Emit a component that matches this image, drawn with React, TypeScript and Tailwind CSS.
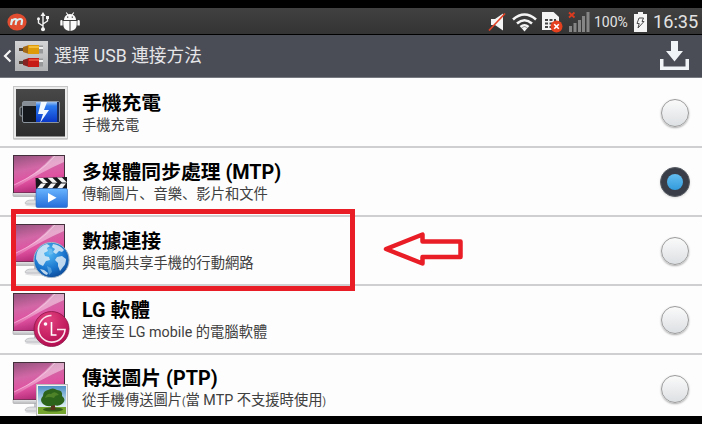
import { useState } from "react";
import type { ReactNode } from "react";

function Monitor({ id, children }: { id: string; children?: ReactNode }) {
  return (
    <svg width="60" height="60" viewBox="0 0 60 60">
      <defs>
        <linearGradient id={`${id}-screen`} x1="0.2" y1="0" x2="0.5" y2="1">
          <stop offset="0" stopColor="#9c5683" />
          <stop offset="0.35" stopColor="#d267a6" />
          <stop offset="0.65" stopColor="#e052a1" />
          <stop offset="1" stopColor="#ae2672" />
        </linearGradient>
        <linearGradient id={`${id}-glow`} x1="0" y1="1" x2="1" y2="0">
          <stop offset="0" stopColor="#fff" stopOpacity="0.05" />
          <stop offset="0.5" stopColor="#ffe0f2" stopOpacity="0.5" />
          <stop offset="1" stopColor="#fff" stopOpacity="0.45" />
        </linearGradient>
        <linearGradient id={`${id}-chin`} x1="0" y1="0" x2="0" y2="1">
          <stop offset="0" stopColor="#f2f2f2" />
          <stop offset="1" stopColor="#b5b7ba" />
        </linearGradient>
      </defs>
      <ellipse cx="28" cy="54" rx="15" ry="1.8" fill="#e2e2e4" />
      <path d="M22 44h16v7H22z" fill="#c3c6ca" />
      <path d="M13 52q1-3 7-3h21v4H15q-2 0-2-1z" fill="#dcdee0" stroke="#a8aaae" strokeWidth="0.6" />
      <rect x="1" y="41" width="52" height="4.5" rx="1" fill={`url(#${id}-chin)`} stroke="#a6a6aa" strokeWidth="0.6" />
      <rect x="1" y="4" width="52" height="38" fill="#43303c" />
      <rect x="2" y="5" width="50" height="36.5" fill={`url(#${id}-screen)`} />
      <path d="M2 34Q24 24 41 5h11v6Q31 20 2 38z" fill={`url(#${id}-glow)`} />
      <path d="M2 34Q30 21 43 5" fill="none" stroke="#ffd5ec" strokeWidth="0.9" opacity="0.6" />
      {children}
    </svg>
  );
}

function ChargeIcon() {
  return (
    <svg width="60" height="60" viewBox="0 -1 60 60">
      <defs>
        <linearGradient id="tile" x1="0" y1="0" x2="0" y2="1">
          <stop offset="0" stopColor="#484848" />
          <stop offset="1" stopColor="#2c2c2c" />
        </linearGradient>
        <linearGradient id="cell" x1="0" y1="0" x2="0" y2="1">
          <stop offset="0" stopColor="#9fc4f0" />
          <stop offset="0.2" stopColor="#2c7bf0" />
          <stop offset="1" stopColor="#0938c8" />
        </linearGradient>
      </defs>
      <rect x="1" y="4" width="55" height="52.5" rx="1" fill="#a9a9a9" />
      <rect x="1.5" y="3.5" width="54" height="52" fill="#ebebeb" stroke="#c6c6c6" />
      <rect x="4" y="6" width="49" height="47.5" fill="url(#tile)" />
      <rect x="8" y="24" width="4" height="9" rx="1" fill="#20262b" stroke="#b6bcc0" strokeWidth="0.8" />
      <rect x="10.5" y="18.5" width="37" height="21" rx="1.5" fill="#15181d" stroke="#8b939c" />
      <path d="M11 19h13v4H11z" fill="#888e95" />
      <path d="M24 19h21v20H24z" fill="url(#cell)" />
      <path d="M45 19h2v20h-2z" fill="#1a2c57" />
      <path d="m29 19-3 12h5l-3 9 9-13h-5l3-8z" fill="#f2f9ff" />
    </svg>
  );
}

function MediaIcon() {
  return (
    <Monitor id="media">
      <defs>
        <linearGradient id="clip" x1="0" y1="0" x2="0" y2="1">
          <stop offset="0" stopColor="#69b5ff" />
          <stop offset="1" stopColor="#246dda" />
        </linearGradient>
      </defs>
      <path d="m23.5 27 31.5-1v12H24z" fill="#16181b" />
      <path d="m26 27 5 5h5l-5-5zm9.5-.2 5 5h5l-5-5zm9.5-.4 5 5h5l-5-5zM25 37.5l4-5h5l-4 5zm10 0 4-5h5l-4 5zm10 0 4-5h5l-4 5z" fill="#f4f4f4" />
      <rect x="24" y="37.5" width="31.5" height="19" rx="1.5" fill="url(#clip)" stroke="#2c69bd" strokeWidth="0.6" />
      <path d="m36 42 8.5 4.8-8.5 4.7z" fill="#fff" />
    </Monitor>
  );
}

function TetherIcon() {
  return (
    <Monitor id="tether">
      <defs>
        <radialGradient id="globe" cx="0.4" cy="0.3" r="0.75">
          <stop offset="0" stopColor="#56bdf7" />
          <stop offset="0.6" stopColor="#1b77cf" />
          <stop offset="1" stopColor="#0c4795" />
        </radialGradient>
      </defs>
      <circle cx="39.5" cy="40" r="17.6" fill="url(#globe)" stroke="#a5b6c6" strokeWidth="1" />
      <path d="M26 30q4-5 9-6l3 2-3 2 1 3-4 2 1 3 4 1 1 3-4 1-3 5-4-2-3-5q0-5 2-9zM41 24q7 1 11 6l-2 2-3-1-3 3-3-2 2-3-3-2zM45 37l5-1 4 3q0 5-3 8l-3 4-2-5v-3l-3-3zM28 49l4 1 4 3-1 2q-4-1-7-6z" fill="#dcebf6" opacity="0.85" />
      <path d="m36 28 4 1 1 5-4 1zM35 46l4 2 1 4-3 3z" fill="#85c5ed" opacity="0.5" />
    </Monitor>
  );
}

function SoftwareIcon() {
  return (
    <Monitor id="software">
      <defs>
        <radialGradient id="brand" cx="0.4" cy="0.25" r="0.8">
          <stop offset="0" stopColor="#e34381" />
          <stop offset="1" stopColor="#b1094d" />
        </radialGradient>
      </defs>
      <circle cx="39.5" cy="40" r="17.5" fill="url(#brand)" stroke="#8c1747" strokeWidth="0.8" />
      <path d="M39.5 26.5A13.3 13.3 0 1 0 53 40.5h-8" fill="none" stroke="#fbe6ee" strokeWidth="1.6" />
      <path d="M39.5 33v13h5" fill="none" stroke="#fff" strokeWidth="1.6" />
      <circle cx="33.5" cy="35" r="1.8" fill="#fff" />
    </Monitor>
  );
}

function PictureIcon() {
  return (
    <Monitor id="picture">
      <defs>
        <linearGradient id="sky" x1="0" y1="0" x2="0" y2="1">
          <stop offset="0" stopColor="#4e91c7" />
          <stop offset="0.7" stopColor="#d8ecf4" />
        </linearGradient>
      </defs>
      <rect x="24.5" y="26.5" width="31" height="31" fill="#f2f2f2" stroke="#bdbdbd" />
      <path d="M26 28h28v28H26z" fill="url(#sky)" />
      <path d="M26 49h28v7H26z" fill="#75a52e" />
      <ellipse cx="41" cy="51.5" rx="10" ry="2" fill="#365d18" />
      <path d="M39.5 44h3l1 8h-5z" fill="#58351c" />
      <path d="M31 46q-4-4 0-8 0-5 5-6 5-3 9 0 6 0 5 6 5 4 0 8-4 3-8 1-6 3-11-1z" fill="#2c641c" />
      <path d="M33 40q2-5 6-4 4-4 8 1-4 0-5 3-5-2-9 0z" fill="#4f8329" />
    </Monitor>
  );
}

function StatusBar() {
  return (
    <div className="flex h-[27px] items-center justify-between border-b border-black bg-linear-to-b from-[#414141] to-[#343434] pt-px pr-[3px] pl-[7px] text-[#e2e2e2]">
      <div className="flex items-center">
        <svg width="20" height="18" viewBox="0 0 20 18">
          <ellipse cx="10" cy="9" rx="9.6" ry="8.6" fill="#df4c30" />
          <path d="m4 12 1.2-6M4.8 8.5Q6 6 8 6q2 0 1.2 2.3L8.5 12M9.2 8.5Q10.8 6 13 6q2.6 0 2 2.3L14.3 12" fill="none" stroke="#d9eef0" strokeWidth="2.1" />
        </svg>
        <svg className="ml-[9px]" width="14" height="20" viewBox="0 0 14 20" fill="none" stroke="#f5f5f5" strokeWidth="1.4">
          <path d="M7 17V3M7 14 2.5 11V7M7 12l4.5-3V5" />
          <path d="m7 0 2.5 4h-5z" fill="#f5f5f5" stroke="none" />
          <circle cx="7" cy="17.2" r="2" fill="#f5f5f5" stroke="none" />
          <circle cx="2.5" cy="6.8" r="1.5" fill="#f5f5f5" stroke="none" />
          <path d="M10 4h3v3h-3z" fill="#f5f5f5" stroke="none" />
        </svg>
        <svg className="ml-[10px]" width="20" height="20" viewBox="0 0 20 20" fill="#fafafa">
          <path d="M4 8q.2-4 3.2-5.3L5.8.8l.8-.6 1.6 2q1.8-.5 3.6 0l1.6-2 .8.6-1.4 1.9Q15.8 4 16 8zM3.3 9h6.2v10Q3.3 18 3.3 12.5zM10.5 9h6.2v3.5q0 5.5-6.2 6.5zM.3 9.2Q.4 8 1.4 8t1.2 1.2v4.3H.3zM17.4 9.2Q17.5 8 18.6 8t1.2 1.2v4.3h-2.4z" />
          <path d="M7 4.5h1.3v1.3H7zM11.7 4.5H13v1.3h-1.3z" fill="#444" />
        </svg>
      </div>
      <div className="flex items-center">
        <svg width="18" height="20" viewBox="0 0 18 20">
          <path d="M3 7h4l8-5.5v17L7 13H3z" fill="#f4f4f4" />
          <path d="M1 18.5 17 1.5" stroke="#e34427" strokeWidth="1.7" />
        </svg>
        <svg className="ml-[6px]" width="25" height="20" viewBox="0 0 25 20" fill="none" stroke="#f5f5f5" strokeWidth="2.6">
          <path d="M1 7.5q11.5-10 23 0M5 11.5q7.5-6.5 15 0M8.5 15q4-3.5 8 0" />
          <path d="m12.5 19.5-3-3.4q3-2 6 0z" fill="#f5f5f5" stroke="none" />
        </svg>
        <svg className="ml-1" width="22" height="23" viewBox="0 0 22 23">
          <path d="M1 2h11.5L18 7v13H1z" fill="#f4f4f4" />
          <path d="M4 9h3v2H4zM8.5 9h3v2h-3zM13 9h2v2h-2zM4 12.5h3v2H4zM8.5 12.5h3v2h-3zM4 16h3v2H4zM8.5 16h3v2h-3z" fill="#454545" />
          <circle cx="15.5" cy="16.5" r="6" fill="#e5411f" />
          <path d="m13.2 14.2 4.6 4.6m0-4.6-4.6 4.6" stroke="#fff" strokeWidth="1.6" />
        </svg>
        <svg className="ml-[5px]" width="22" height="21" viewBox="0 0 22 21">
          <path d="M1 15h3v6H1zM5.5 12h3v9h-3zM10 9h3v12h-3zM14 5h3v16h-3zM18.5 1h3v20h-3z" fill="#858585" />
          <path d="m1 1.5 5.5 5m0-5-5.5 5" stroke="#dc3b20" strokeWidth="1.8" />
        </svg>
        <span className="ml-1 w-[35px] text-[14px] leading-5">100%</span>
        <svg className="ml-[5px]" width="13" height="20" viewBox="0 0 13 20">
          <path d="M4 0h5v2h4v18H0V2h4z" fill="#f5f5f5" />
          <path d="M5 6h4.5L8 9.5h2L4 16l1.2-4.5H3z" fill="none" stroke="#4b4b4b" />
        </svg>
        <span className="ml-[6px] w-[46px] text-[18.2px] leading-5">16:35</span>
      </div>
    </div>
  );
}

function Header() {
  return (
    <header className="flex h-[43px] items-center border-b border-[#777980] bg-[#4a4c56] pr-[13px] pl-[3px]">
      <svg width="9" height="14" viewBox="0 0 9 14">
        <path d="M7.5 1.5 2 7l5.5 5.5" fill="none" stroke="#f5f5f5" strokeWidth="2.2" />
      </svg>
      <svg className="ml-[3px]" width="33" height="32" viewBox="0 0 33 32">
        <defs>
          <linearGradient id="plate" x1="0" y1="0" x2="0" y2="1">
            <stop offset="0" stopColor="#d4d4d6" />
            <stop offset="1" stopColor="#b1b2b4" />
          </linearGradient>
        </defs>
        <path d="M0 1h33v30H0z" fill="url(#plate)" />
        <path d="M4 8h6v3H4zM4 21h6v3H4z" fill="#514337" />
        <path d="m8 7 6-2v9l-6-2z" fill="#a56a18" />
        <path d="m8 20 6-2v9l-6-2z" fill="#852322" />
        <path d="M13 5h11v9H13z" fill="#df9a0a" />
        <path d="M14 6h10v2H14z" fill="#f3bd3a" />
        <path d="M13 18h11v9H13z" fill="#c71b18" />
        <path d="M14 19h10v2H14z" fill="#e34a3a" />
        <path d="M24 5.5h4v8h-4zM24 18.5h4v8h-4z" fill="#98999a" />
        <path d="M24 7h4v2h-4zM24 20h4v2h-4z" fill="#eee" />
      </svg>
      <h1 className="ml-[6px] grow text-[17.7px] leading-6 text-[#e6e6e8]">選擇 USB 連接方法</h1>
      <svg width="29" height="30" viewBox="0 0 29 30" fill="#f1f4f7">
        <path d="M11 0h7v10h5l-8.5 10.5L6 10h5zM0 18h3.5v7.5h22V18H29v11H0z" />
      </svg>
    </header>
  );
}

const options = [
  { id: "charge", title: "手機充電", description: "手機充電", icon: <ChargeIcon /> },
  { id: "mtp", title: "多媒體同步處理 (MTP)", description: "傳輸圖片、音樂、影片和文件", icon: <MediaIcon /> },
  { id: "tether", title: "數據連接", description: "與電腦共享手機的行動網路", icon: <TetherIcon /> },
  { id: "software", title: "LG 軟體", description: "連接至 LG mobile 的電腦軟體", icon: <SoftwareIcon /> },
  {
    id: "ptp",
    title: "傳送圖片 (PTP)",
    description: (
      <>
        從手機傳送圖片<span className="text-[10px]">(</span>當 MTP 不支援時使用
        <span className="text-[10px]">)</span>
      </>
    ),
    icon: <PictureIcon />,
  },
];

export default function App() {
  const [selected, setSelected] = useState("mtp");

  return (
    <main className="relative h-[424px] w-[702px] overflow-hidden bg-black pt-2 font-['Roboto','Noto_Sans_CJK_SC',sans-serif]">
      <StatusBar />
      <Header />
      <div className="h-[338px] overflow-hidden bg-[#fdfdfd]">
        {options.map((option) => (
          <button
            key={option.id}
            onClick={() => setSelected(option.id)}
            className="flex h-[69px] w-full items-center border-b-2 border-[#cfcfd2] px-3 text-left first:h-[70px] first:pt-px"
          >
            <span className="h-[62px] shrink-0">{option.icon}</span>
            <span className="ml-[10px] flex grow flex-col pt-0.5">
              <span className="text-[19.8px] leading-[23px] font-bold text-black">{option.title}</span>
              <span className="text-[14.3px] leading-[21px] text-[#404040]">{option.description}</span>
            </span>
            {selected === option.id ? (
              <span className="flex size-[30px] items-center justify-center rounded-full border border-[#5a5e65] bg-[#383d47] shadow-sm">
                <span className="size-4 rounded-full bg-linear-to-b from-[#63bdf0] to-[#329bdc]" />
              </span>
            ) : (
              <span className="mr-px size-7 rounded-full border border-[#9b9b9b] bg-linear-to-b from-[#fafafa] to-[#dde0e3] shadow-[0_1px_2px_#aaa]" />
            )}
          </button>
        ))}
      </div>

      {/* highlight around the tethering row */}
      <div className="pointer-events-none absolute top-[209px] left-[11px] h-[82px] w-[344px] border-5 border-[#e91d26]" />
      <svg className="pointer-events-none absolute top-[230px] left-[380px]" width="86" height="38" viewBox="0 0 86 38">
        <path d="M6 19 42.5 4.5v7h38V27h-38v6.5z" fill="#fdfdfd" stroke="#e91d26" strokeWidth="4.5" strokeLinejoin="round" />
      </svg>
    </main>
  );
}
